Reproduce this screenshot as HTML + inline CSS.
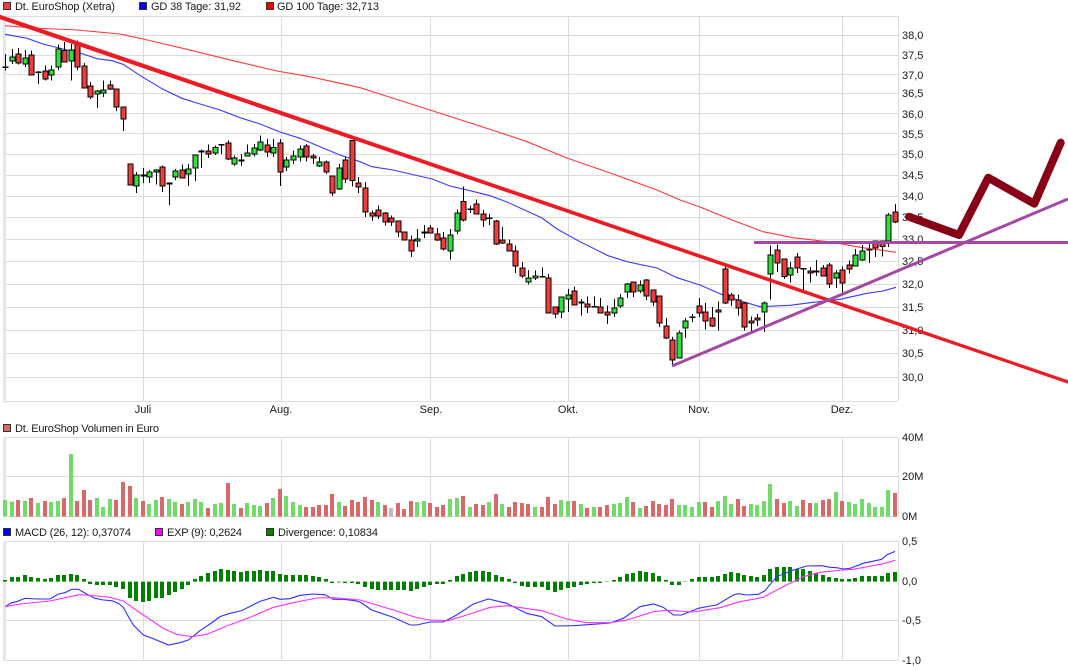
<!DOCTYPE html>
<html><head><meta charset="utf-8"><title>Dt. EuroShop</title>
<style>
html,body{margin:0;padding:0;background:#fff;overflow:hidden}
svg{display:block}
text{font-family:"Liberation Sans",sans-serif;font-size:11px;fill:#1a1a1a}
.w{fill:none;stroke:#000;stroke-width:3}
.d{fill:none;stroke:#000;stroke-width:5}
.r{fill:#f03c3c;stroke:#000;stroke-width:3}
.g{fill:#2fe03a;stroke:#000;stroke-width:3}
.vg{fill:none;stroke:#6fdc6a;stroke-width:12}
.vr{fill:none;stroke:#d96868;stroke-width:12}
.dv{fill:none;stroke:#008000;stroke-width:12}
.mb{fill:none;stroke:#3030ff;stroke-width:3.3}
.mm{fill:none;stroke:#ff30ff;stroke-width:3.3}
</style></head><body>
<svg width="1068" height="670" viewBox="0 0 1068 670" xmlns="http://www.w3.org/2000/svg">
<rect width="1068" height="670" fill="#fff"/>
<!-- grid -->
<path shape-rendering="crispEdges" fill="none" stroke="#dcdcdc" stroke-width="1" d="M3 16.5H898M3 35.5H898M3 55.5H898M3 74.5H898M3 93.5H898M3 113.5H898M3 133.5H898M3 154.5H898M3 175.5H898M3 196.5H898M3 217.5H898M3 239.5H898M3 261.5H898M3 284.5H898M3 307.5H898M3 330.5H898M3 353.5H898M3 377.5H898M3 401.5H898
M143.5 16V401M281.5 16V401M430.5 16V401M568.5 16V401M699.5 16V401M842.5 16V401M898.5 16V401
M3 437.5H898M3 476.5H898M3 516.5H898M143.5 437V516M281.5 437V516M430.5 437V516M568.5 437V516M699.5 437V516M842.5 437V516M898.5 437V516
M3 541.5H898M3 620.5H898M3 660.5H898M143.5 541V660M281.5 541V660M430.5 541V660M568.5 541V660M699.5 541V660M842.5 541V660M898.5 541V660"/>
<rect x="3" y="16" width="3" height="385" fill="#e6e6e6"/>
<rect x="3" y="437" width="3" height="80" fill="#e6e6e6"/>
<rect x="3" y="541" width="3" height="120" fill="#e6e6e6"/>

<!-- moving averages -->
<polyline fill="none" stroke="#ff3a3a" stroke-width="1.1" points="5,25.7 33,28 77,30 120,34 143,39 187,49.3 233,60.7 277,71 313,77.3 360,87.7 430,110 492,130 527,141.7 567,158 613,174 657,190 680,200 700,207 727,218 763,231.7 793,237.7 833,242.3 860,247.3 896,252.3"/>
<polyline fill="none" stroke="#3a3aff" stroke-width="1.1" points="5,34.3 27,38.3 43,44 67,50 80,53 97,58.7 112,60.7 123,64.3 143,77.3 163,89.3 182,98.3 200,104 220,110 240,117.7 260,124 280,132 300,138.3 320,146.7 340,155 360,161.7 372,166.7 393,170 432,179 450,186 470,190.7 490,195.7 507,202 542,218 557,229 580,241.7 608,255.7 627,261.7 657,268 677,277.7 700,285 723,295 743,301.7 760,306.7 790,305.3 810,302.7 840,299.3 867,293.3 883,291 896,287.3"/>

<!-- candles A -->
<g transform="translate(.5 .5) scale(.33333)" shape-rendering="crispEdges">
<path class="w" d="M15 160V210M36 145V190M54 142V192M75 148V200M93 150V223M114 212V250M135 195V240M153 195V240M174 132V208M192 125V185M213 130V240M231 120V208M252 187V262M270 245V295M291 268V323M309 240V290M330 240V268M348 265V332M369 319V392M390 490V555M408 515V578M429 503V548M447 508V548M468 505V552M486 495V575M507 549V614M525 505V538M546 492V532M564 490V557M585 463V542M603 447V503M624 432V473M645 435V463M663 433V460M684 420V478M702 465V497M723 460V497M741 432V468M762 430V468M780 405V452M801 415V470M819 415V470M840 415V557M858 470V512M879 450V490M900 435V483M918 430V483M939 460V491M957 470V500M978 480V520M996 526V587M1017 490V568M1035 468V547M1056 420V558M1074 530V578"/>
<path class="d" d="M6 200H24M105 215H123M420 525H438M498 549H516M594 453H612M654 433H672M714 480H732"/>
<path class="r" d="M54 160h7.5V187h-15V160zM93 163h7.5V223h-15V163zM135 212h7.5V235h-15V212zM192 150h7.5V184h-15V150zM231 130h7.5V199h-15V130zM252 196h7.5V262h-15V196zM270 257h7.5V289h-15V257zM330 253h7.5V265h-15V253zM348 265h7.5V319h-15V265zM369 319h7.5V355h-15V319zM390 490h7.5V553h-15V490zM486 499h7.5V556h-15V499zM546 508h7.5V532h-15V508zM624 451h7.5V460h-15V451zM684 427h7.5V475h-15V427zM801 433h7.5V455h-15V433zM840 427h7.5V515h-15V427zM918 436h7.5V469h-15V436zM939 466h7.5V472h-15V466zM978 484h7.5V514h-15V484zM996 526h7.5V577h-15V526zM1035 478h7.5V535h-15V478zM1056 420h7.5V540h-15V420zM1074 547h7.5V559h-15V547z"/>
<path class="g" d="M36 170h7.5V181h-15V170zM75 172h7.5V190h-15V172zM153 208h7.5V223h-15V208zM174 145h7.5V199h-15V145zM213 148h7.5V182h-15V148zM291 271h7.5V280h-15V271zM309 268h7.5V277h-15V268zM408 523h7.5V556h-15V523zM447 514h7.5V529h-15V514zM468 508h7.5V514h-15V508zM525 511h7.5V529h-15V511zM564 505h7.5V520h-15V505zM585 463h7.5V502h-15V463zM645 441h7.5V457h-15V441zM702 472h7.5V490h-15V472zM741 457h7.5V466h-15V457zM762 442h7.5V460h-15V442zM780 424h7.5V448h-15V424zM819 441h7.5V457h-15V441zM858 478h7.5V499h-15V478zM879 466h7.5V478h-15V466zM900 445h7.5V469h-15V445zM957 484h7.5V496h-15V484zM1017 502h7.5V565h-15V502z"/>
</g>
<!-- candles B -->
<g transform="translate(360.5 130.5) scale(.33333)" shape-rendering="crispEdges">
<path class="w" d="M15 155V260M36 240V272M54 225V265M75 245V285M93 255V287M114 271V320M132 304V330M153 315V380M171 295V350M192 283V323M210 283V307M231 292V332M249 305V360M270 295V387M291 237V311M309 168V273M330 225V248M348 207V250M369 238V290M387 250V283M408 268V343M426 290V340M447 327V362M465 345V428M486 395V442M504 418V462M525 420V448M546 411V441M564 430V547M585 529V563M603 499V563M624 476V545M642 468V523M663 505V555M681 498V547M702 498V530M720 503V548M741 525V581M762 505V560M780 490V532M801 458V502M819 454V500M840 450V487M858 445V508M879 478V527M897 496V590M918 562V625M936 620V703M957 600V684M975 562V623M996 550V575M1017 502V560"/>
<path class="d" d="M183 306H201M321 236H339M378 263H396M537 439H555M654 516H672M693 529H711M987 560H1005"/>
<path class="r" d="M15 172h7.5V245h-15V172zM36 248h7.5V257h-15V248zM54 238h7.5V257h-15V238zM75 248h7.5V275h-15V248zM93 262h7.5V275h-15V262zM114 271h7.5V305h-15V271zM132 304h7.5V329h-15V304zM153 328h7.5V361h-15V328zM210 292h7.5V307h-15V292zM231 310h7.5V329h-15V310zM249 322h7.5V355h-15V322zM309 213h7.5V269h-15V213zM348 220h7.5V250h-15V220zM369 250h7.5V268h-15V250zM408 271h7.5V341h-15V271zM426 328h7.5V337h-15V328zM447 340h7.5V361h-15V340zM465 361h7.5V406h-15V361zM486 412h7.5V437h-15V412zM564 442h7.5V547h-15V442zM585 529h7.5V550h-15V529zM642 481h7.5V523h-15V481zM681 520h7.5V529h-15V520zM720 530h7.5V547h-15V530zM741 544h7.5V554h-15V544zM819 454h7.5V484h-15V454zM858 448h7.5V496h-15V448zM879 478h7.5V514h-15V478zM897 496h7.5V577h-15V496zM918 586h7.5V623h-15V586zM936 628h7.5V689h-15V628zM1017 526h7.5V547h-15V526z"/>
<path class="g" d="M171 325h7.5V332h-15V325zM270 313h7.5V361h-15V313zM291 247h7.5V301h-15V247zM504 442h7.5V455h-15V442zM525 436h7.5V442h-15V436zM603 499h7.5V544h-15V499zM624 493h7.5V505h-15V493zM762 532h7.5V547h-15V532zM780 502h7.5V527h-15V502zM801 460h7.5V485h-15V460zM840 463h7.5V481h-15V463zM957 607h7.5V682h-15V607zM975 571h7.5V592h-15V571z"/>
</g>
<!-- candles C -->
<g transform="translate(660.5 130.5) scale(.33333)" shape-rendering="crispEdges">
<path class="w" d="M135 517V597M156 530V590M174 513V600M195 398V520M213 487V527M234 492V555M252 515V600M273 558V604M291 550V587M312 513V605M330 345V507M351 342V425M372 385V445M390 395V456M411 368V428M429 415V482M450 410V456M468 388V436M489 403V438M507 398V473M528 418V473M546 408V487M567 390V429M585 355V408M606 343V392M627 335V398M645 331V380M666 331V378M684 247V350M705 220V278"/>
<path class="d" d="M420 415H438M459 423H477M618 358H636"/>
<path class="r" d="M135 544h7.5V571h-15V544zM156 562h7.5V586h-15V562zM174 539h7.5V544h-15V539zM195 415h7.5V517h-15V415zM213 493h7.5V508h-15V493zM234 508h7.5V532h-15V508zM252 517h7.5V589h-15V517zM273 572h7.5V577h-15V572zM291 562h7.5V568h-15V562zM351 358h7.5V397h-15V358zM372 385h7.5V438h-15V385zM411 379h7.5V412h-15V379zM450 421h7.5V427h-15V421zM489 412h7.5V436h-15V412zM507 403h7.5V460h-15V403zM546 418h7.5V457h-15V418zM567 403h7.5V415h-15V403zM645 331h7.5V352h-15V331zM666 331h7.5V348h-15V331zM705 244h7.5V274h-15V244z"/>
<path class="g" d="M312 517h7.5V544h-15V517zM330 373h7.5V430h-15V373zM390 412h7.5V433h-15V412zM528 428h7.5V442h-15V428zM585 373h7.5V406h-15V373zM606 361h7.5V388h-15V361zM684 254h7.5V332h-15V254z"/>
</g>

<!-- volume -->
<g transform="translate(0 400) scale(.33333)">
<path class="vg" d="M15 300V350M36 305V350M75 303V350M114 309V350M153 306V350M174 303V350M213 162V350M291 294V350M309 321V350M330 297V350M408 294V350M447 312V350M468 300V350M507 297V350M525 306V350M564 306V350M585 297V350M603 306V350M645 312V350M663 309V350M702 312V350M741 309V350M762 315V350M780 318V350M819 294V350M858 288V350M879 306V350M900 315V350M1017 306V350"/>
<path class="vr" d="M54 300V350M93 294V350M135 303V350M192 294V350M231 303V350M252 270V350M270 300V350M348 300V350M369 246V350M390 258V350M429 303V350M486 291V350M546 312V350M624 324V350M684 249V350M723 324V350M801 309V350M840 267V350M918 321V350M939 321V350M957 315V350M978 315V350M996 282V350M1035 318V350M1056 300V350M1074 306V350"/>
</g>
<g transform="translate(360 400) scale(.33333)">
<path class="vg" d="M54 306V350M171 306V350M192 303V350M270 297V350M291 294V350M330 321V350M387 306V350M426 312V350M525 321V350M603 300V350M624 303V350M663 312V350M702 321V350M762 312V350M780 309V350M801 291V350M840 324V350M957 315V350M975 315V350M996 321V350M1017 306V350M1074 303V350"/>
<path class="vr" d="M15 291V350M36 300V350M75 315V350M114 309V350M132 327V350M153 303V350M210 309V350M231 321V350M249 315V350M309 288V350M348 312V350M369 315V350M408 282V350M447 321V350M465 306V350M486 309V350M504 312V350M546 321V350M564 291V350M585 312V350M642 303V350M681 324V350M720 321V350M741 315V350M819 306V350M858 318V350M879 303V350M897 312V350M918 315V350M936 297V350M1035 306V350M1056 321V350"/>
<path fill="none" stroke="#bdbdbd" stroke-width="12" d="M93 324V350"/>
</g>
<g transform="translate(710 400) scale(.33333)">
<path class="vg" d="M24 303V350M45 288V350M63 312V350M123 312V350M141 315V350M162 303V350M180 252V350M240 303V350M261 318V350M318 309V350M378 276V350M417 306V350M435 312V350M456 297V350M477 309V350M495 321V350M516 321V350M534 270V350"/>
<path class="vr" d="M6 321V350M84 297V350M102 318V350M201 297V350M222 309V350M279 300V350M300 309V350M339 300V350M357 297V350M396 303V350M555 279V350"/>
</g>

<!-- MACD -->
<g transform="translate(0 400) scale(.33333)">
<path class="dv" d="M15 540V545M36 531V545M54 531V545M75 525V545M93 531V545M114 534V545M135 537V545M153 534V545M174 525V545M192 525V545M213 522V545M231 525V545M252 537V545M270 552V545M291 555V545M309 555V545M330 555V545M348 561V545M369 567V545M390 594V545M408 603V545M429 606V545M447 603V545M468 594V545M486 594V545M507 585V545M525 576V545M546 567V545M564 555V545M585 537V545M603 528V545M624 519V545M645 513V545M663 507V545M684 510V545M702 513V545M723 516V545M741 513V545M762 513V545M780 510V545M801 513V545M819 513V545M840 522V545M858 525V545M879 525V545M900 525V545M918 525V545M939 528V545M957 531V545M978 537V545M996 549V545M1017 547V545M1035 549V545M1056 549V545M1074 552V545"/>
<polyline class="mb" points="15,620 35,608 50,605 75,595 110,597 150,597 175,582 195,578 215,568 235,568 260,582 285,595 310,600 335,602 355,610 370,622 385,650 400,675 430,705 465,718 505,735 540,728 565,720 600,692 630,672 660,650 690,640 725,632 780,604 820,592 840,598 870,596 900,586 940,582 975,584 1000,598 1030,598 1065,602 1080,606"/>
<polyline class="mm" points="15,620 60,612 150,603 200,592 240,584 290,588 330,592 370,603 430,645 490,685 530,703 575,710 620,703 680,678 750,652 820,622 880,608 950,594 1000,593 1080,600"/>
</g>
<g transform="translate(360 400) scale(.33333)">
<path class="dv" d="M15 561V545M36 567V545M54 570V545M75 570V545M93 570V545M114 570V545M132 570V545M153 573V545M171 567V545M192 561V545M210 555V545M231 552V545M249 552V545M270 540V545M291 528V545M309 522V545M330 516V545M348 513V545M369 513V545M387 516V545M408 525V545M426 531V545M447 537V545M465 549V545M486 558V545M504 561V545M525 561V545M546 561V545M564 570V545M585 576V545M603 570V545M624 564V545M642 561V545M663 555V545M681 552V545M702 549V545M720 549V545M741 546V545M762 540V545M780 531V545M801 522V545M819 519V545M840 513V545M858 516V545M879 519V545M897 528V545M918 540V545M936 555V545M957 555V545M975 546V545M996 537V545M1017 531V545M1035 531V545"/>
<path class="dv" d="M1056 531V545M1074 528V545"/>
<polyline class="mb" points="0,606 35,630 100,652 150,675 170,675 210,666 250,666 290,645 340,612 385,597 440,610 500,640 545,650 585,678 640,677 700,673 750,669 790,655 840,620 880,612 910,622 940,645 965,645 1015,625 1050,618"/>
<polyline class="mm" points="0,600 100,630 170,653 210,660 265,662 320,645 390,622 440,617 545,632 620,657 680,668 750,668 800,660 880,635 920,631 1000,636 1050,628"/>
</g>
<g transform="translate(710 400) scale(.33333)">
<path class="dv" d="M6 531V545M24 528V545M45 522V545M63 516V545M84 519V545M102 525V545M123 528V545M141 531V545M162 525V545M180 507V545M201 501V545M222 501V545M240 501V545M261 507V545M279 507V545M300 513V545M318 519V545M339 525V545M357 531V545M378 534V545M396 537V545M417 537V545M435 534V545M456 528V545M477 528V545M495 528V545M516 528V545M534 519V545M555 516V545"/>
<polyline class="mb" points="0,618 20,615 70,585 85,581 110,585 145,583 165,572 200,530 250,510 290,498 335,497 360,502 380,503 400,507 420,505 460,490 515,478 530,465 555,454"/>
<polyline class="mm" points="0,628 30,623 90,605 160,592 200,570 280,530 330,517 400,510 430,508 520,491 555,481"/>
</g>

<!-- legends -->
<g stroke="#333" stroke-width="1" shape-rendering="crispEdges">
<rect x="3.5" y="2.5" width="7" height="7" fill="#f03c3c"/>
<rect x="139.5" y="2.5" width="7" height="7" fill="#0000f0"/>
<rect x="266.5" y="2.5" width="7" height="7" fill="#f00000"/>
<rect x="3.5" y="424.5" width="7" height="7" fill="#d96868"/>
<rect x="3.5" y="528.5" width="7" height="7" fill="#0000f0"/>
<rect x="155.5" y="528.5" width="7" height="7" fill="#ff00ff"/>
<rect x="266.5" y="528.5" width="7" height="7" fill="#008000"/>
</g>
<text x="15" y="10" textLength="100" lengthAdjust="spacing">Dt. EuroShop (Xetra)</text>
<text x="151" y="10" textLength="90" lengthAdjust="spacing">GD 38 Tage: 31,92</text>
<text x="277" y="10" textLength="102" lengthAdjust="spacing">GD 100 Tage: 32,713</text>
<text x="15" y="432" textLength="144" lengthAdjust="spacing">Dt. EuroShop Volumen in Euro</text>
<text x="15" y="536" textLength="116" lengthAdjust="spacing">MACD (26, 12): 0,37074</text>
<text x="167" y="536" textLength="75" lengthAdjust="spacing">EXP (9): 0,2624</text>
<text x="278" y="536" textLength="100" lengthAdjust="spacing">Divergence: 0,10834</text>

<!-- axis labels -->
<text x="902" y="39">38,0</text><text x="902" y="59">37,5</text><text x="902" y="79">37,0</text><text x="902" y="97">36,5</text><text x="902" y="118">36,0</text><text x="902" y="138">35,5</text><text x="902" y="158">35,0</text><text x="902" y="179">34,5</text><text x="902" y="200">34,0</text><text x="902" y="221">33,5</text><text x="902" y="243">33,0</text><text x="902" y="265">32,5</text><text x="902" y="288">32,0</text><text x="902" y="311">31,5</text><text x="902" y="334">31,0</text><text x="902" y="357">30,5</text><text x="902" y="381">30,0</text>
<text x="143" y="413" text-anchor="middle">Juli</text><text x="281" y="413" text-anchor="middle">Aug.</text><text x="431" y="413" text-anchor="middle">Sep.</text><text x="568" y="413" text-anchor="middle">Okt.</text><text x="699" y="413" text-anchor="middle">Nov.</text><text x="842" y="413" text-anchor="middle">Dez.</text>
<text x="902" y="441">40M</text><text x="902" y="480">20M</text><text x="902" y="520">0M</text>
<text x="902" y="545">0,5</text><text x="902" y="585">0,0</text><text x="902" y="624">-0,5</text><text x="902" y="664">-1,0</text>

<!-- hand-drawn trend lines -->
<polygon fill="#ed1c24" points="0,14.7 1068,380.3 1068,383.7 0,19.3"/>
<line x1="672" y1="366" x2="1068" y2="199" stroke="#a349a4" stroke-width="3"/>
<rect x="754" y="241" width="314" height="3" fill="#a349a4"/>
<polyline fill="none" stroke="#880015" stroke-width="8" stroke-linejoin="round" stroke-linecap="round" points="909,216.7 959,235 988.3,177.7 1034.3,203.7 1060.7,142.7"/>
</svg>
</body></html>
